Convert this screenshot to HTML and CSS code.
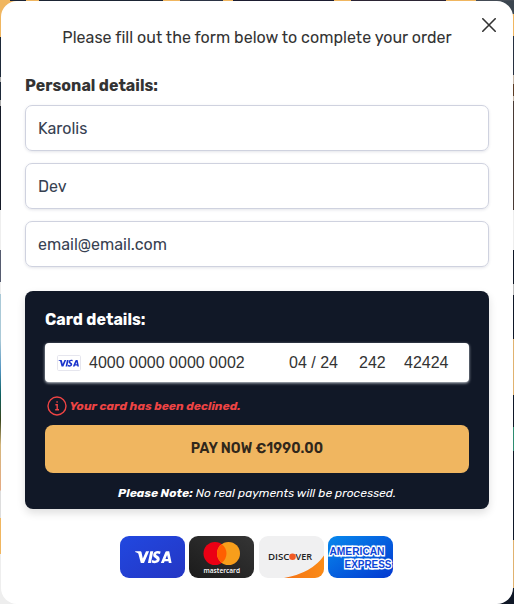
FILE: index.html
```html
<!DOCTYPE html>
<html lang="en">
<head>
<meta charset="utf-8">
<title>Complete your order</title>
<link rel="stylesheet" href="styles.css">
</head>
<body>
<main class="modal">
  <button class="close" aria-label="Close"><svg width="14" height="14" viewBox="0 0 14 14" fill="none" stroke="#333" stroke-width="1.6" stroke-linecap="round"><path d="M.8.8l12.4 12.4M13.2.8.8 13.2"/></svg></button>
  <p class="intro"><span>Please fill out the form below to complete your order</span></p>
  <h2 class="heading">Personal details:</h2>
  <div class="fields">
    <div class="field"><span class="first">Karolis</span></div>
    <div class="field"><span class="last">Dev</span></div>
    <div class="field"><span class="email">email@email.com</span></div>
  </div>
  <section class="card">
    <h2 class="heading card-heading">Card details:</h2>
    <div class="card-input">
      <svg class="brand" width="24" height="16" viewBox="0 0 24 16"><rect x=".5" y=".5" width="23" height="15" rx="1.2" fill="#fff" stroke="#e6e6ee"/><g fill="#1a34cc" transform="translate(-7.200 -3.700) scale(.565)"><path d="M15.200 15.200h5.100q1 0 1.200 1l1.300 6.400 3.200-7.400h3.100L24 27h-3.200l-2.500-9.500q-.9-1-3.100-1.600z"/><path d="M30.300 15.200h3L30.900 27h-3z"/><path d="m40.600 15.600-.6 2.400c-2-1-3.900-.7-3.900.3 0 1.500 3.600 1.500 3.600 4.700 0 3.800-4.500 5-8.100 3.500l.6-2.500c2.200 1.100 4.500.9 4.500-.4 0-1.500-3.500-1.700-3.500-4.600 0-3.300 3.900-4.900 7.400-3.400z"/><path fill-rule="evenodd" d="M46.500 15.200h2.700L51.600 27h-2.800l-.3-1.700h-3.900l-.7 1.700h-3.100l4.500-10.800q.3-1 1.200-1zm.6 3.700-1.600 4.200H48z"/></g></svg>
      <span class="number">4000 0000 0000 0002</span>
      <span class="expiry">04 / 24</span>
      <span class="cvc">242</span>
      <span class="zip">42424</span>
    </div>
    <div class="error">
      <svg width="20" height="20" viewBox="0 0 20 20" fill="none" stroke="#ef4444" stroke-width="1.4"><circle cx="10" cy="10" r="9"/><path d="M8.400 8.700h1.800v5M8.200 13.800h3.800"/><path d="M9.400 6h1.400" stroke-width="1.600"/></svg>
      <span>Your card has been declined.</span>
    </div>
    <div class="pay"><span>PAY NOW €1990.00</span></div>
    <p class="note"><strong>Please Note:</strong> <span>No real payments will be processed.</span></p>
  </section>
  <div class="logos">
    <svg width="65" height="42" viewBox="0 0 65 42"><defs><linearGradient id="v" x1="0" y1="0" x2="1" y2="1"><stop stop-color="#2148e0"/><stop offset="1" stop-color="#2436c4"/></linearGradient></defs><rect width="65" height="42" rx="9" fill="url(#v)"/><g fill="#fff"><path d="M15.200 15.200h5.100q1 0 1.200 1l1.300 6.400 3.200-7.400h3.100L24 27h-3.200l-2.500-9.500q-.9-1-3.100-1.600z"/><path d="M30.300 15.200h3L30.900 27h-3z"/><path d="m40.600 15.600-.6 2.400c-2-1-3.900-.7-3.900.3 0 1.500 3.600 1.500 3.600 4.700 0 3.800-4.500 5-8.100 3.500l.6-2.500c2.200 1.100 4.500.9 4.500-.4 0-1.500-3.500-1.700-3.500-4.600 0-3.300 3.900-4.900 7.400-3.400z"/><path fill-rule="evenodd" d="M46.500 15.200h2.700L51.600 27h-2.800l-.3-1.700h-3.900l-.7 1.700h-3.100l4.500-10.800q.3-1 1.200-1zm.6 3.700-1.600 4.200H48z"/></g></svg>
    <svg width="65" height="42" viewBox="0 0 65 42"><defs><linearGradient id="m" x1="0" y1="1" x2="1" y2="0"><stop stop-color="#1b1b1b"/><stop offset="1" stop-color="#353535"/></linearGradient></defs><rect width="65" height="42" rx="9" fill="url(#m)"/><circle cx="26" cy="17.500" r="11.500" fill="#eb0014"/><circle cx="39.500" cy="17.500" r="11.500" fill="#f79e1b"/><path d="M32.750 8.200a11.500 11.500 0 0 1 0 18.600 11.500 11.500 0 0 1 0-18.600" fill="#ff5f00"/><text x="14.500" y="36.500" textLength="36.500" lengthAdjust="spacingAndGlyphs" class="mc">mastercard</text></svg>
    <svg width="65" height="42" viewBox="0 0 65 42"><defs><clipPath id="c"><rect width="65" height="42" rx="9"/></clipPath><linearGradient id="o" x1="0" x2="1"><stop stop-color="#f47216"/><stop offset="1" stop-color="#fa8b16"/></linearGradient></defs><g clip-path="url(#c)"><path fill="#f0f0f1" d="M0 0h65v42H0z"/><path d="M25 42Q53 37 65 19.500V42z" fill="url(#o)"/></g><text x="9" y="24" textLength="21.500" lengthAdjust="spacingAndGlyphs" class="dc">DISC</text><circle cx="33.500" cy="20.700" r="3.300" fill="#f15a24"/><text x="36.500" y="24" textLength="16.500" lengthAdjust="spacingAndGlyphs" class="dc">VER</text></svg>
    <svg width="65" height="42" viewBox="0 0 65 42"><defs><linearGradient id="a" x1="0" y1="0" x2="1" y2="1"><stop stop-color="#0789ed"/><stop offset="1" stop-color="#0338d0"/></linearGradient></defs><rect width="65" height="42" rx="9" fill="url(#a)"/><text x="1.500" y="18.500" textLength="55" lengthAdjust="spacingAndGlyphs" class="ax">AMERICAN</text><text x="16.500" y="31.500" textLength="47" lengthAdjust="spacingAndGlyphs" class="ax">EXPRESS</text></svg>
  </div>
</main>
</body>
</html>
```
FILE: styles.css
```css
* { box-sizing: border-box; }
html { height: 100%; }
body {
  margin: 0;
  height: 604px;
  padding: 1px 1px 0;
  overflow: hidden;
  font-family: Rubik, Roboto, sans-serif;
  color: #333;
  background:
    linear-gradient(90deg, #f0b660 10px, #1b2434 10px 26px, #f0b660 26px 39px, #1b2434 39px 163px, #f0b660 163px 180px, #2b3344 180px 223px, #f0b660 223px 233px, #1b1c30 233px 334px, #f0b660 334px 351px, #2b2434 351px 446px, #f0b660 446px 476px, #444b55 476px) 0 0 / 100% 1px no-repeat,
    linear-gradient(#f0b660 37px, #1d2939 37px 77px, #aaa 77px 82px, #1d2939 82px 100px, #aaa 100px 106px, #161b29 106px 210px, #eee 210px 250px, #565c70 250px 282px, #eee 282px 294px, #aac9d7 294px 340px, #5294c0 370px, #0c6060 395px, #39451c 420px, #d5b77d 445px, #e5aa83 490px, #ddd 491px 518px, #f0b660 518px 554px, #eee 554px) 0 0 / 50% 100% no-repeat,
    linear-gradient(#3b454f 14px, #f0b660 14px 36px, #27303f 36px 75px, #c5b5a5 75px 84px, #5b3b24 84px 96px, #c5b5a5 96px 101px, #493a35 101px 210px, #eee 210px 250px, #0f1726 250px 284px, #bbb 284px 295px, #0f1726 295px 339px, #e0b26f 339px 395px, #0f1726 395px 427px, #2d8b70 427px 451px, #0f1726 451px 540px, #e0b26f 540px 588px, #0f1726 588px) 100% 0 / 50% 100% no-repeat;
}
.modal {
  position: relative;
  height: 603px;
  padding: 25px 24px 0;
  border-radius: 16px;
  background: #fff;
}
.close {
  position: absolute;
  top: 17px;
  right: 17px;
  display: flex;
  padding: 0;
  border: 0;
  background: none;
}
.intro {
  margin: 0;
  font-size: 16px;
  line-height: 24px;
  text-align: center;
  letter-spacing: .03px;
}
.heading {
  margin: 24px 0 7px;
  font-size: 16px;
  font-weight: 700;
  line-height: 24px;
}
.fields { display: grid; gap: 12px; }
.field {
  height: 46px;
  padding: 0 12px;
  border: 1px solid #cfd2df;
  border-radius: 7px;
  box-shadow: 0 1px 3px rgb(30 40 80 / .12);
  font-size: 16px;
  line-height: 45px;
  color: #374151;
}
.card {
  height: 218px;
  margin-top: 24px;
  padding: 17px 20px 0;
  border-radius: 8px;
  background: #111827;
  color: #fff;
  box-shadow: 0 4px 8px rgb(0 0 0 / .13);
}
.card-heading { margin: 0 0 11px; }
.card-input {
  display: flex;
  align-items: center;
  height: 39px;
  padding: 0 12px;
  border-radius: 4px;
  background: #fff;
  box-shadow: 0 1px 3px rgb(230 235 241 / .9);
  color: #333;
  font: 16px/38px "Liberation Sans", sans-serif;
  white-space: nowrap;
}
.number { width: 200px; margin-left: 8px; }
.expiry { width: 70px; }
.cvc { width: 45px; }
.error {
  display: flex;
  align-items: center;
  height: 20px;
  margin: 14px 0 9px 2px;
  gap: 2.500px;
  color: #ef4444;
  font-size: 12px;
  font-style: italic;
  font-weight: 700;
}
.pay {
  height: 48px;
  border-radius: 8px;
  background: #f0b660;
  color: #30271b;
  font-size: 14px;
  font-weight: 600;
  line-height: 47px;
  text-align: center;
  letter-spacing: .13px;
}
.note {
  margin: 12px 0 0;
  font-size: 12px;
  font-style: italic;
  line-height: 16px;
  text-align: center;
}
.logos {
  display: flex;
  justify-content: center;
  gap: 4.600px;
  margin: 27px 1px 0 0;
}
.mc { font: 600 7px "Open Sans", sans-serif; fill: #fff; }
.dc { font: 600 9px "Open Sans", sans-serif; fill: #222; }
.ax {
  font: 700 11.500px "Liberation Sans", sans-serif;
  fill: #0b45d8;
  stroke: #fff;
  stroke-width: 2.800px;
  paint-order: stroke;
}
```
